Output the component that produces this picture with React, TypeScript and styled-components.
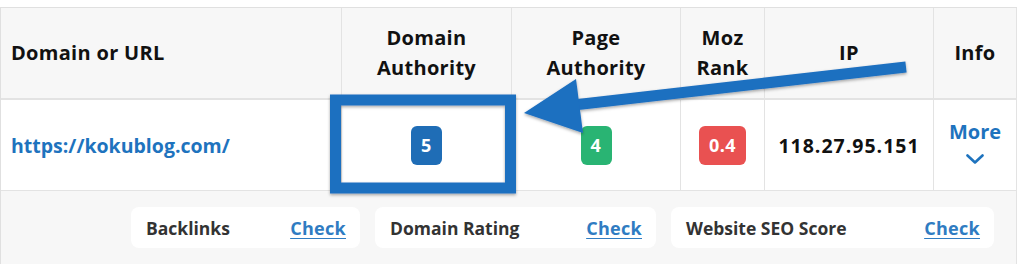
import React from "react";
import styled, { createGlobalStyle } from "styled-components";

const Global = createGlobalStyle`
  html, body { margin: 0; padding: 0; background: #ffffff; }
  body { font-family: "Open Sans", "Lato", sans-serif; }
`;

const Page = styled.div`
  position: relative;
  width: 1024px;
  height: 264px;
  overflow: hidden;
  padding-top: 7px;
  box-sizing: border-box;
`;

const Table = styled.div`
  display: grid;
  grid-template-columns: 341px 170px 169px 84px 169px 83px;
  grid-template-rows: 92px 91px 80px;
  border-left: 1px solid #e0e0e0;
  border-top: 1px solid #e0e0e0;
  width: 1016px;
`;

const HeadCell = styled.div<{ $align?: "left" | "center" }>`
  box-sizing: border-box;
  background: #f7f7f7;
  border-right: 1px solid #e3e3e3;
  border-bottom: 2px solid #e3e3e3;
  display: flex;
  align-items: center;
  justify-content: ${(p) => (p.$align === "left" ? "flex-start" : "center")};
  text-align: ${(p) => (p.$align === "left" ? "left" : "center")};
  padding: 0 10px;
  font-weight: 700;
  font-size: 20px;
  letter-spacing: 0.3px;
  line-height: 30px;
  color: #111111;
`;

const BodyCell = styled.div<{ $align?: "left" | "center" }>`
  box-sizing: border-box;
  background: #ffffff;
  border-right: 1px solid #e3e3e3;
  border-bottom: 1px solid #e3e3e3;
  display: flex;
  flex-direction: column;
  align-items: ${(p) => (p.$align === "left" ? "flex-start" : "center")};
  justify-content: center;
  padding: 0 10px;
  font-weight: 700;
  font-size: 19.5px;
  color: #111111;
`;

const IpText = styled.span`
  letter-spacing: 1px;
`;

const UrlLink = styled.a`
  color: #1e73be;
  text-decoration: none;
  font-weight: 700;
  font-size: 19.5px;
`;

const Badge = styled.span<{ $color: string }>`
  display: inline-flex;
  align-items: center;
  justify-content: center;
  height: 39px;
  min-width: 31px;
  box-sizing: border-box;
  padding: 0 10px;
  border-radius: 6px;
  background: ${(p) => p.$color};
  color: #ffffff;
  font-weight: 700;
  font-size: 18px;
  letter-spacing: 0.5px;
`;

const MoreButton = styled.button`
  border: none;
  background: none;
  padding: 0;
  margin-bottom: 6px;
  display: flex;
  flex-direction: column;
  align-items: center;
  gap: 10px;
  color: #1e73be;
  font-family: inherit;
  font-weight: 700;
  font-size: 20px;
  line-height: 24px;
  cursor: pointer;
`;

const Footer = styled.div`
  grid-column: 1 / -1;
  box-sizing: border-box;
  background: #f7f7f7;
  border-right: 1px solid #e3e3e3;
  display: flex;
  justify-content: flex-end;
  align-items: flex-start;
  gap: 15px;
  padding: 16px 22px 0 0;
`;

const Card = styled.div<{ $w: number }>`
  width: ${(p) => p.$w}px;
  height: 41px;
  box-sizing: border-box;
  background: #ffffff;
  border-radius: 8px;
  display: flex;
  align-items: center;
  justify-content: space-between;
  padding: 0 14px 0 15px;
  font-size: 17.5px;
  font-weight: 700;
`;

const CardLabel = styled.span`
  color: #333333;
`;

const CheckLink = styled.a`
  color: #2f7cc2;
  text-decoration: underline;
  text-underline-offset: 3px;
  font-weight: 700;
  font-size: 18px;
  letter-spacing: 0.3px;
`;

const Overlay = styled.svg`
  position: absolute;
  left: 0;
  top: 0;
  pointer-events: none;
`;

export default function App() {
  return (
    <Page>
      <Global />
      <Table>
        <HeadCell $align="left">Domain or URL</HeadCell>
        <HeadCell>Domain<br />Authority</HeadCell>
        <HeadCell>Page<br />Authority</HeadCell>
        <HeadCell>Moz<br />Rank</HeadCell>
        <HeadCell>IP</HeadCell>
        <HeadCell>Info</HeadCell>

        <BodyCell $align="left">
          <UrlLink href="#">https://kokublog.com/</UrlLink>
        </BodyCell>
        <BodyCell><Badge $color="#1f6db6">5</Badge></BodyCell>
        <BodyCell><Badge $color="#29b473">4</Badge></BodyCell>
        <BodyCell><Badge $color="#e95151">0.4</Badge></BodyCell>
        <BodyCell><IpText>118.27.95.151</IpText></BodyCell>
        <BodyCell>
          <MoreButton>
            More
            <svg width="18" height="10" viewBox="0 0 18 10">
              <path d="M1.5 1.5 L9 8.5 L16.5 1.5" fill="none" stroke="#1e73be" strokeWidth="2.6" strokeLinecap="round" strokeLinejoin="round" />
            </svg>
          </MoreButton>
        </BodyCell>

        <Footer>
          <Card $w={229}><CardLabel>Backlinks</CardLabel><CheckLink href="#">Check</CheckLink></Card>
          <Card $w={281}><CardLabel>Domain Rating</CardLabel><CheckLink href="#">Check</CheckLink></Card>
          <Card $w={323}><CardLabel>Website SEO Score</CardLabel><CheckLink href="#">Check</CheckLink></Card>
        </Footer>
      </Table>

      <Overlay width="1024" height="264" viewBox="0 0 1024 264">
        <defs>
          <filter id="sh" x="-10%" y="-10%" width="120%" height="130%">
            <feDropShadow dx="0" dy="1.5" stdDeviation="1.5" floodColor="#000" floodOpacity="0.35" />
          </filter>
        </defs>
        <g filter="url(#sh)">
          <rect x="335.5" y="100" width="175" height="88" fill="none" stroke="#1e6fc0" strokeWidth="11" />
          <line x1="906" y1="67" x2="565" y2="106" stroke="#1e6fc0" strokeWidth="11" />
          <polygon points="524,113 576,79 583,133" fill="#1e6fc0" />
        </g>
      </Overlay>
    </Page>
  );
}
